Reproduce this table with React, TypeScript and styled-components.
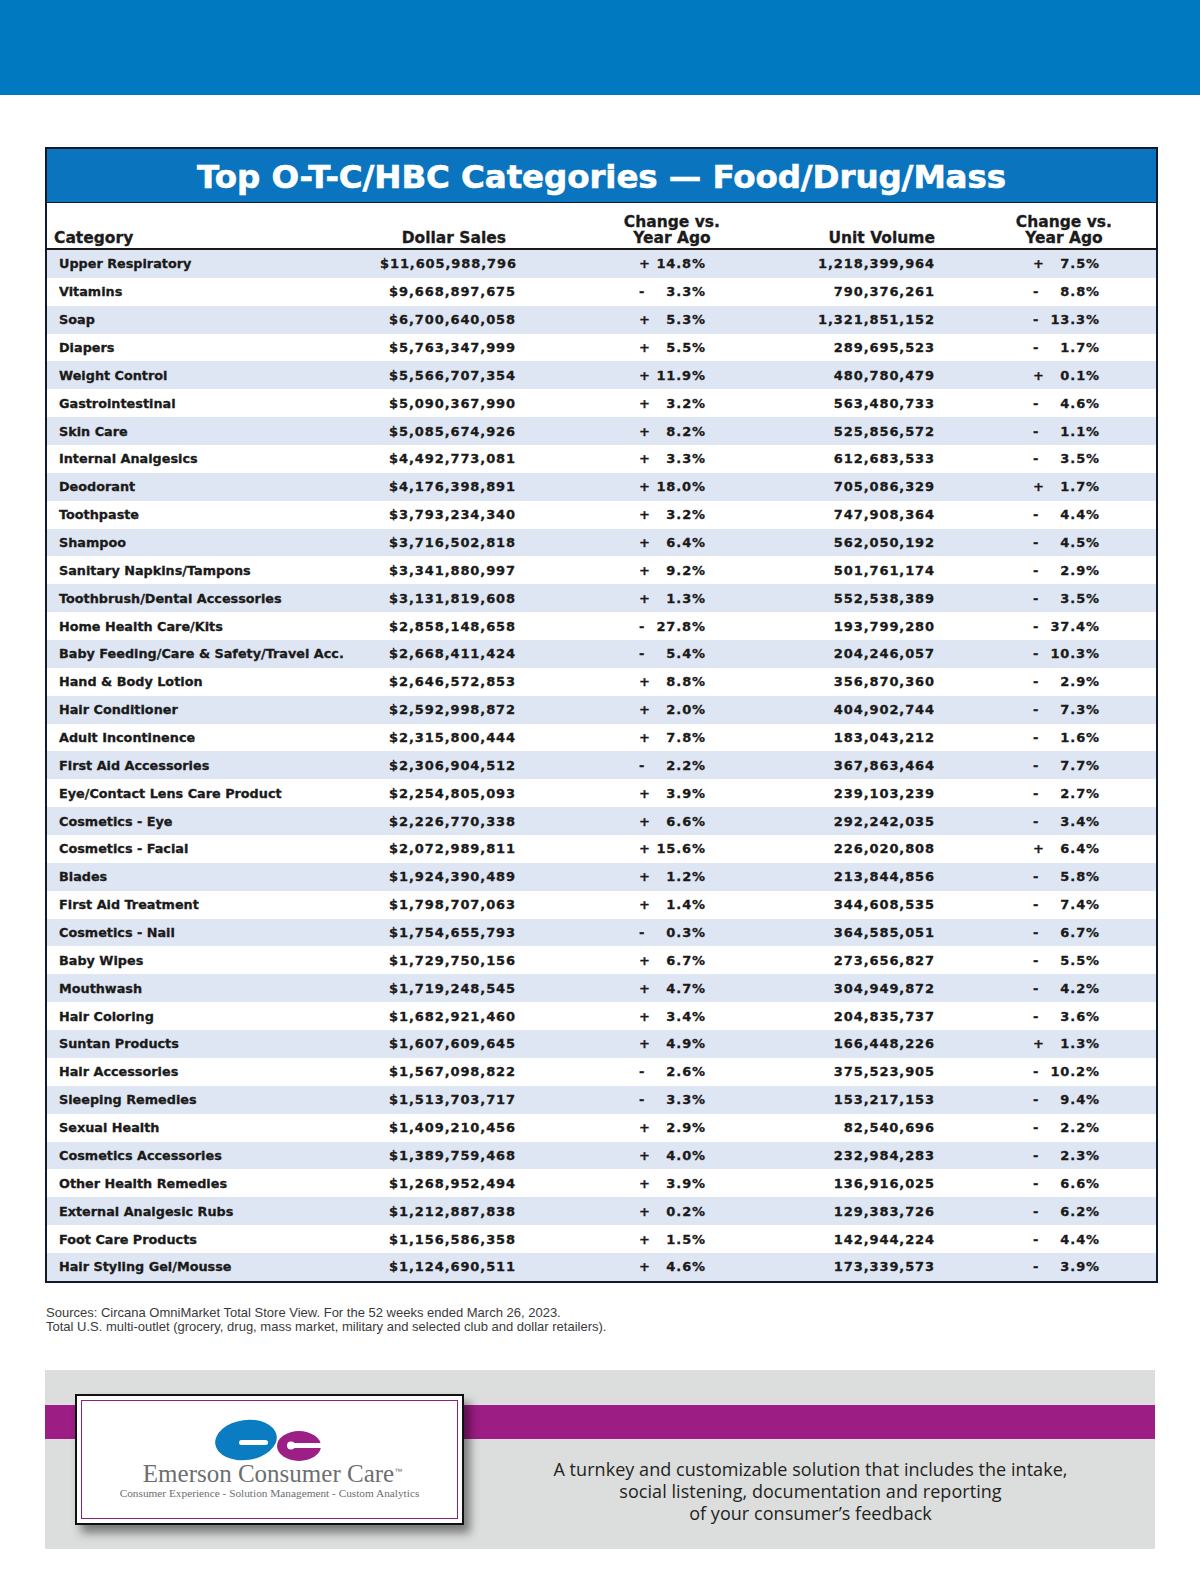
import styled, { createGlobalStyle } from "styled-components";

type Row = [string, string, string, string, string];

// category, dollar sales, change, unit volume, change
const ROWS: Row[] = [
  ["Upper Respiratory", "$11,605,988,796", "+ 14.8%", "1,218,399,964", "+ 7.5%"],
  ["Vitamins", "$9,668,897,675", "- 3.3%", "790,376,261", "- 8.8%"],
  ["Soap", "$6,700,640,058", "+ 5.3%", "1,321,851,152", "- 13.3%"],
  ["Diapers", "$5,763,347,999", "+ 5.5%", "289,695,523", "- 1.7%"],
  ["Weight Control", "$5,566,707,354", "+ 11.9%", "480,780,479", "+ 0.1%"],
  ["Gastrointestinal", "$5,090,367,990", "+ 3.2%", "563,480,733", "- 4.6%"],
  ["Skin Care", "$5,085,674,926", "+ 8.2%", "525,856,572", "- 1.1%"],
  ["Internal Analgesics", "$4,492,773,081", "+ 3.3%", "612,683,533", "- 3.5%"],
  ["Deodorant", "$4,176,398,891", "+ 18.0%", "705,086,329", "+ 1.7%"],
  ["Toothpaste", "$3,793,234,340", "+ 3.2%", "747,908,364", "- 4.4%"],
  ["Shampoo", "$3,716,502,818", "+ 6.4%", "562,050,192", "- 4.5%"],
  ["Sanitary Napkins/Tampons", "$3,341,880,997", "+ 9.2%", "501,761,174", "- 2.9%"],
  ["Toothbrush/Dental Accessories", "$3,131,819,608", "+ 1.3%", "552,538,389", "- 3.5%"],
  ["Home Health Care/Kits", "$2,858,148,658", "- 27.8%", "193,799,280", "- 37.4%"],
  ["Baby Feeding/Care & Safety/Travel Acc.", "$2,668,411,424", "- 5.4%", "204,246,057", "- 10.3%"],
  ["Hand & Body Lotion", "$2,646,572,853", "+ 8.8%", "356,870,360", "- 2.9%"],
  ["Hair Conditioner", "$2,592,998,872", "+ 2.0%", "404,902,744", "- 7.3%"],
  ["Adult Incontinence", "$2,315,800,444", "+ 7.8%", "183,043,212", "- 1.6%"],
  ["First Aid Accessories", "$2,306,904,512", "- 2.2%", "367,863,464", "- 7.7%"],
  ["Eye/Contact Lens Care Product", "$2,254,805,093", "+ 3.9%", "239,103,239", "- 2.7%"],
  ["Cosmetics - Eye", "$2,226,770,338", "+ 6.6%", "292,242,035", "- 3.4%"],
  ["Cosmetics - Facial", "$2,072,989,811", "+ 15.6%", "226,020,808", "+ 6.4%"],
  ["Blades", "$1,924,390,489", "+ 1.2%", "213,844,856", "- 5.8%"],
  ["First Aid Treatment", "$1,798,707,063", "+ 1.4%", "344,608,535", "- 7.4%"],
  ["Cosmetics - Nail", "$1,754,655,793", "- 0.3%", "364,585,051", "- 6.7%"],
  ["Baby Wipes", "$1,729,750,156", "+ 6.7%", "273,656,827", "- 5.5%"],
  ["Mouthwash", "$1,719,248,545", "+ 4.7%", "304,949,872", "- 4.2%"],
  ["Hair Coloring", "$1,682,921,460", "+ 3.4%", "204,835,737", "- 3.6%"],
  ["Suntan Products", "$1,607,609,645", "+ 4.9%", "166,448,226", "+ 1.3%"],
  ["Hair Accessories", "$1,567,098,822", "- 2.6%", "375,523,905", "- 10.2%"],
  ["Sleeping Remedies", "$1,513,703,717", "- 3.3%", "153,217,153", "- 9.4%"],
  ["Sexual Health", "$1,409,210,456", "+ 2.9%", "82,540,696", "- 2.2%"],
  ["Cosmetics Accessories", "$1,389,759,468", "+ 4.0%", "232,984,283", "- 2.3%"],
  ["Other Health Remedies", "$1,268,952,494", "+ 3.9%", "136,916,025", "- 6.6%"],
  ["External Analgesic Rubs", "$1,212,887,838", "+ 0.2%", "129,383,726", "- 6.2%"],
  ["Foot Care Products", "$1,156,586,358", "+ 1.5%", "142,944,224", "- 4.4%"],
  ["Hair Styling Gel/Mousse", "$1,124,690,511", "+ 4.6%", "173,339,573", "- 3.9%"],
];

function Change({ value, pad }: { value: string; pad: number }) {
  const [sign, pct] = value.split(" ");
  return (
    <ChangeCell $pad={pad}>
      <span>{sign === "-" ? "-" : "+"}</span>
      <span>{pct}</span>
    </ChangeCell>
  );
}

function LogoMark() {
  return (
    <svg width="110" height="44" viewBox="0 0 110 44">
      <ellipse cx="31" cy="21" rx="31" ry="20" fill="#0a7cc1" transform="rotate(-8 31 21)" />
      <rect x="24" y="21" width="29" height="5" rx="2.5" fill="#fff" />
      <ellipse cx="84" cy="27" rx="22" ry="15" fill="#9c1f85" />
      <circle cx="76" cy="26.5" r="4" fill="#fff" />
      <rect x="76" y="24" width="34" height="5" fill="#fff" />
    </svg>
  );
}

export default function App() {
  return (
    <>
      <GlobalStyle />
      <Page>
        <TopBand />
        <Main>
          <TableBox>
            <TitleBar>Top O-T-C/HBC Categories — Food/Drug/Mass</TitleBar>
            <HeadRow>
              <HeadCell $align="left" $pad="0 0 0 7px">Category</HeadCell>
              <HeadCell $align="right" $pad="0">Dollar Sales</HeadCell>
              <HeadCell $align="right" $pad="0">
                <Stack>
                  Change vs.
                  <br />
                  Year Ago
                </Stack>
              </HeadCell>
              <HeadCell $align="right" $pad="0">Unit Volume</HeadCell>
              <HeadCell $align="right" $pad="0">
                <Stack>
                  Change vs.
                  <br />
                  Year Ago
                </Stack>
              </HeadCell>
            </HeadRow>
            {ROWS.map((r, i) => (
              <DataRow key={r[0]} $shaded={i % 2 === 0}>
                <CatCell>{r[0]}</CatCell>
                <NumCell>{r[1]}</NumCell>
                <Change value={r[2]} pad={124} />
                <NumCell>{r[3]}</NumCell>
                <Change value={r[4]} pad={99} />
              </DataRow>
            ))}
          </TableBox>

          <Sources>
            Sources: Circana OmniMarket Total Store View. For the 52 weeks ended March 26, 2023.
            <br />
            Total U.S. multi-outlet (grocery, drug, mass market, military and selected club and dollar retailers).
          </Sources>

          <AdBox>
            <Stripe />
            <LogoCard>
              <LogoInner>
                <LogoMark />
                <BrandName>
                  Emerson Consumer Care<sup>™</sup>
                </BrandName>
                <Tagline>Consumer Experience - Solution Management - Custom Analytics</Tagline>
              </LogoInner>
            </LogoCard>
            <Pitch>
              A turnkey and customizable solution that includes the intake,
              <br />
              social listening, documentation and reporting
              <br />
              of your consumer’s feedback
            </Pitch>
          </AdBox>
        </Main>
      </Page>
    </>
  );
}

const GlobalStyle = createGlobalStyle`
  body {
    margin: 0;
    background: #fff;
    font-family: "DejaVu Sans", sans-serif;
  }
`;

const Page = styled.div`
  width: 1200px;
  min-height: 1582px;
  background: #fff;
`;

const TopBand = styled.div`
  height: 95px;
  background: #0079c1;
`;

const Main = styled.div`
  padding: 52px 0 0 45px;
  width: 1113px;
`;

const TableBox = styled.div`
  border: 2px solid #0f1b2d;
  background: #fff;
`;

const TitleBar = styled.div`
  height: 54px;
  background: #0a74be;
  border-bottom: 1px solid #0f1b2d;
  color: #fff;
  font-family: "DejaVu Sans", sans-serif;
  font-weight: 700;
  font-size: 32.5px;
  letter-spacing: -0.1px;
  -webkit-text-stroke: 0.6px #fff;
  display: flex;
  align-items: center;
  justify-content: center;
  padding-top: 2px;
  box-sizing: border-box;
`;

const HeadRow = styled.div`
  display: grid;
  grid-template-columns: 333px 126px 214px 215px 177px 1fr;
  align-items: end;
  height: 47px;
  padding-bottom: 2px;
  border-bottom: 2px solid #1a1a1a;
  box-sizing: border-box;
  color: #1b1b1b;
  font-weight: 700;
  font-size: 15.5px;
  line-height: 16px;
  -webkit-text-stroke: 0.3px #1b1b1b;
`;

const HeadCell = styled.div<{ $align: string; $pad: string }>`
  text-align: ${(p) => p.$align};
  padding: ${(p) => p.$pad};
`;

const Stack = styled.span`
  display: inline-block;
  text-align: center;
`;

const DataRow = styled.div<{ $shaded: boolean }>`
  display: grid;
  grid-template-columns: 333px 135px 190px 229px 165px 1fr;
  align-items: center;
  height: 27.86px;
  background: ${(p) => (p.$shaded ? "#dfe6f3" : "#fff")};
  color: #1a1a1a;
  font-weight: 700;
  font-size: 13px;
  -webkit-text-stroke: 0.3px #1a1a1a;
`;

const CatCell = styled.div`
  padding-left: 12px;
  font-size: 12.8px;
  white-space: nowrap;
`;

const NumCell = styled.div`
  text-align: right;
  letter-spacing: 0.9px;
  margin-right: -1px;
`;

const ChangeCell = styled.div<{ $pad: number }>`
  display: flex;
  justify-content: space-between;
  padding-left: ${(p) => p.$pad}px;
  letter-spacing: 0.9px;
  margin-right: -1px;
`;

const Sources = styled.div`
  margin-top: 23px;
  font-family: "Liberation Sans", Arial, sans-serif;
  font-size: 13px;
  line-height: 14px;
  color: #3a3a3a;
  padding-left: 1px;
`;

const AdBox = styled.div`
  position: relative;
  margin-top: 36px;
  width: 1110px;
  height: 179px;
  background: #dcdddd;
  display: flex;
  padding: 24px 0 0 30px;
  box-sizing: border-box;
`;

const Stripe = styled.div`
  position: absolute;
  left: 0;
  right: 0;
  top: 35px;
  height: 34px;
  background: #9c1d84;
`;

const LogoCard = styled.div`
  position: relative;
  width: 389px;
  height: 131px;
  box-sizing: border-box;
  border: 2px solid #111;
  background: #fff;
  padding: 4px;
  box-shadow: 6px 8px 9px rgba(0, 0, 0, 0.45);
`;

const LogoInner = styled.div`
  height: 100%;
  box-sizing: border-box;
  border: 1.5px solid #8e1f7d;
  display: flex;
  flex-direction: column;
  align-items: center;
  padding-top: 18px;
`;

const BrandName = styled.div`
  margin-top: -1px;
  font-family: "Liberation Serif", "Times New Roman", serif;
  font-size: 25px;
  line-height: 24px;
  color: #6d6e70;
  padding-left: 6px;

  sup {
    font-family: "Liberation Sans", Arial, sans-serif;
    font-size: 8px;
    vertical-align: top;
    position: relative;
    top: -2px;
  }
`;

const Tagline = styled.div`
  margin-top: 1px;
  font-family: "Liberation Serif", "Times New Roman", serif;
  font-size: 11.3px;
  color: #6d6e70;
  white-space: nowrap;
`;

const Pitch = styled.div`
  flex: 1;
  padding-top: 64px;
  text-align: center;
  font-family: "Open Sans", Lato, sans-serif;
  font-size: 18px;
  line-height: 22px;
  letter-spacing: 0.05px;
  color: #231f20;
  padding-left: 2px;
`;
